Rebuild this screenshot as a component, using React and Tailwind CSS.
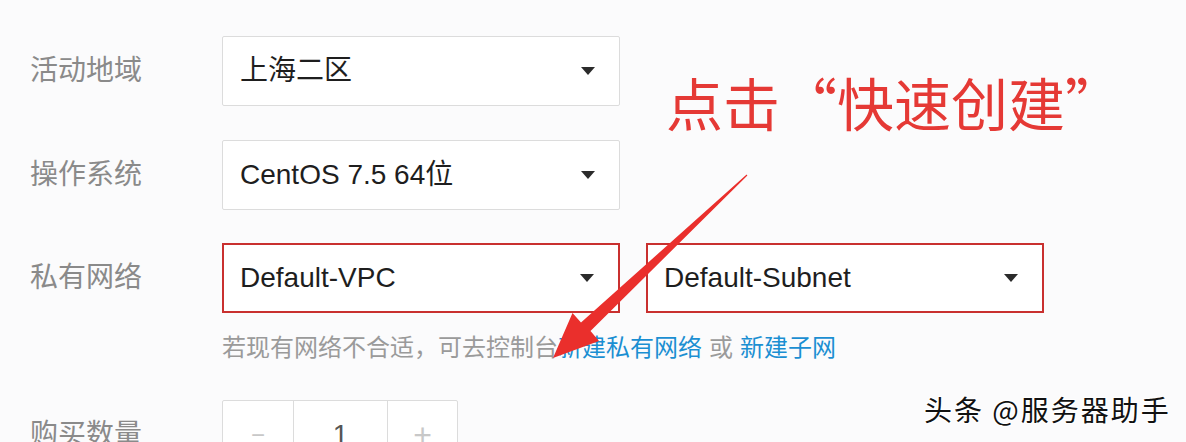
import React from 'react';

const font = { fontFamily: '"Liberation Sans", "Noto Sans CJK SC", sans-serif' };

const Caret = () => (
    <svg width="14" height="8" viewBox="0 0 14 8" className="shrink-0">
        <path d="M0 0 H14 L7 8 Z" fill="#2b2b2b" />
    </svg>
);

const Select = ({ value, danger }) => (
    <div
        className={`flex items-center justify-between w-[398px] h-[70px] bg-white pr-[24px] ${danger
            ? 'border-2 border-[#c9302f] pl-[16px]'
            : 'border border-[#dcdcdc] rounded-[2px] pl-[17px]'
            }`}
    >
        <span className="text-[28px] text-[#1e1e1e] leading-none">{value}</span>
        <Caret />
    </div>
);

const Row = ({ label, children }) => (
    <div className="flex items-center">
        <div className="w-[192px] text-[28px] text-[#8a8a8a] leading-none">{label}</div>
        {children}
    </div>
);

export default function App() {
    return (
        <div className="relative w-[1186px] h-[442px] overflow-hidden bg-[#fbfbfc]" style={font}>
            <div className="flex flex-col pt-[36px] pl-[30px]">
                <Row label="活动地域">
                    <Select value="上海二区" />
                </Row>
                <div className="mt-[34px]">
                    <Row label="操作系统">
                        <Select value="CentOS 7.5 64位" />
                    </Row>
                </div>
                <div className="mt-[33px]">
                    <Row label="私有网络">
                        <div className="flex gap-[26px]">
                            <Select value="Default-VPC" danger />
                            <Select value="Default-Subnet" danger />
                        </div>
                    </Row>
                </div>
                <div className="ml-[192px] mt-[18px] h-[34px] flex items-center text-[24px] text-[#9a9a9a] leading-none">
                    若现有网络不合适，可去控制台
                    <span className="text-[#1b8fd2]">新建私有网络</span>
                    <span className="mx-[7px]">或</span>
                    <span className="text-[#1b8fd2]">新建子网</span>
                </div>
                <div className="mt-[35px]">
                    <Row label="购买数量">
                        <div className="flex h-[70px] border border-[#dcdcdc] rounded-[2px] bg-white">
                            <div className="w-[70px] flex items-center justify-center text-[#c8c8c8] text-[24px]">−</div>
                            <div className="w-[95px] border-x border-[#dcdcdc] flex items-center justify-center text-[28px] text-[#555]">1</div>
                            <div className="w-[69px] flex items-center justify-center text-[#c8c8c8] text-[32px] font-light">+</div>
                        </div>
                    </Row>
                </div>
            </div>

            {/* annotation */}
            <div className="absolute left-[666px] top-[73px] text-[57px] leading-none text-[#e53935]" style={{ fontFamily: '"Noto Sans CJK SC", sans-serif' }}>
                点击“快速创建”
            </div>

            <svg className="absolute inset-0 pointer-events-none" width="1186" height="442">
                <polygon
                    points="747.4,175.5 590.5,331 599,341 553,358 572.5,313 581,322.5 746.6,174.6"
                    fill="#ea2f2c"
                />
            </svg>

            {/* watermark */}
            <div
                className="absolute left-[924px] top-[395px] text-[28px] tracking-[2px] leading-none text-[#111]"
                style={{ fontFamily: '"Noto Sans CJK SC", sans-serif', textShadow: '1px 1px 0 #fff, -1px -1px 0 #fff, 1px -1px 0 #fff, -1px 1px 0 #fff' }}
            >
                头条 @服务器助手
            </div>
        </div>
    );
}
